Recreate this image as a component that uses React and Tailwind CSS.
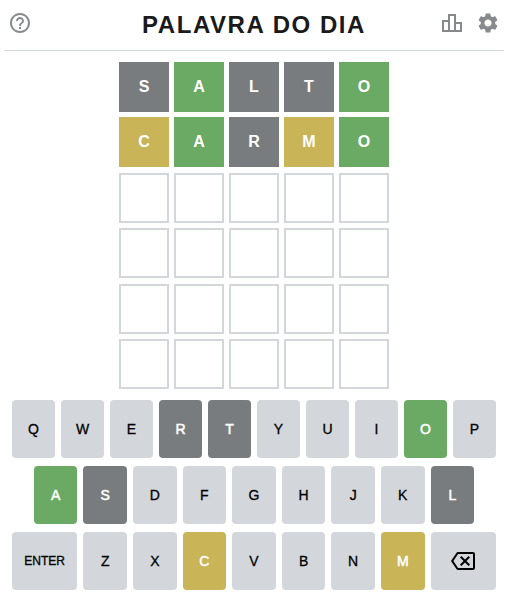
import { MdHelpOutline, MdOutlineLeaderboard, MdSettings, MdOutlineBackspace } from 'react-icons/md';

const GUESSES = [
  [['S', 'gray'], ['A', 'green'], ['L', 'gray'], ['T', 'gray'], ['O', 'green']],
  [['C', 'yellow'], ['A', 'green'], ['R', 'gray'], ['M', 'yellow'], ['O', 'green']],
];

const CELL_COLORS = {
  gray: 'bg-[#787c7e]',
  green: 'bg-[#6aaa64]',
  yellow: 'bg-[#c9b458]',
};

const KEY_COLORS = {
  gray: 'bg-[#787c7e] text-white [-webkit-text-stroke:0.5px]',
  green: 'bg-[#6aaa64] text-white [-webkit-text-stroke:0.5px]',
  yellow: 'bg-[#c9b458] text-white [-webkit-text-stroke:0.5px]',
  none: 'bg-[#d3d6da] text-black [-webkit-text-stroke:0.3px]',
};

const KEY_STATUS = {
  R: 'gray', T: 'gray', O: 'green', A: 'green', S: 'gray', L: 'gray', C: 'yellow', M: 'yellow',
};

function Cell({ letter, status }) {
  if (!letter) {
    return <div className="w-[50px] h-[50px] border-2 border-[#d3d6da]" />;
  }
  return (
    <div className={`w-[50px] h-[50px] flex items-center justify-center text-white font-bold text-base ${CELL_COLORS[status]}`}>
      {letter}
    </div>
  );
}

function Key({ label, wide, children }) {
  const status = KEY_STATUS[label] || 'none';
  return (
    <div
      className={`h-[58px] min-w-0 rounded flex items-center justify-center ${wide ? 'flex-[1.5] text-xs' : 'flex-1 text-sm'} ${KEY_COLORS[status]}`}
    >
      {children || label}
    </div>
  );
}

function KeyRow({ letters }) {
  return letters.split('').map((l) => <Key key={l} label={l} />);
}

export default function App() {
  const rows = [...GUESSES, [], [], [], []];

  return (
    <div className="w-[500px] ml-1 bg-white font-['Liberation_Sans',Arial,sans-serif]">
      <div className="h-[51px] border-b border-[#d3d6da] flex items-center px-1 pb-1">
        <div className="flex-1">
          <MdHelpOutline className="w-6 h-6 text-[#878a8c]" />
        </div>
        <h1 className="text-2xl font-bold tracking-[1.55px] text-[#1a1a1b] mt-1">PALAVRA DO DIA</h1>
        <div className="flex-1 flex items-center justify-end gap-3">
          <MdOutlineLeaderboard className="w-6 h-6 text-[#878a8c]" />
          <MdSettings className="w-6 h-6 text-[#878a8c]" />
        </div>
      </div>

      <div className="flex flex-col items-center gap-[5.4px] mt-[11px]">
        {rows.map((row, i) => (
          <div key={i} className="flex gap-[5px]">
            {[0, 1, 2, 3, 4].map((j) => (
              <Cell key={j} letter={row[j]?.[0]} status={row[j]?.[1]} />
            ))}
          </div>
        ))}
      </div>

      <div className="flex flex-col gap-2 mt-[11px] ml-2 w-[484px]">
        <div className="flex gap-1.5">
          <KeyRow letters="QWERTYUIOP" />
        </div>
        <div className="flex gap-1.5 px-[21.8px]">
          <KeyRow letters="ASDFGHJKL" />
        </div>
        <div className="flex gap-1.5">
          <Key label="ENTER" wide />
          <KeyRow letters="ZXCVBNM" />
          <Key label="DELETE" wide>
            <MdOutlineBackspace className="w-6 h-6" />
          </Key>
        </div>
      </div>
    </div>
  );
}
